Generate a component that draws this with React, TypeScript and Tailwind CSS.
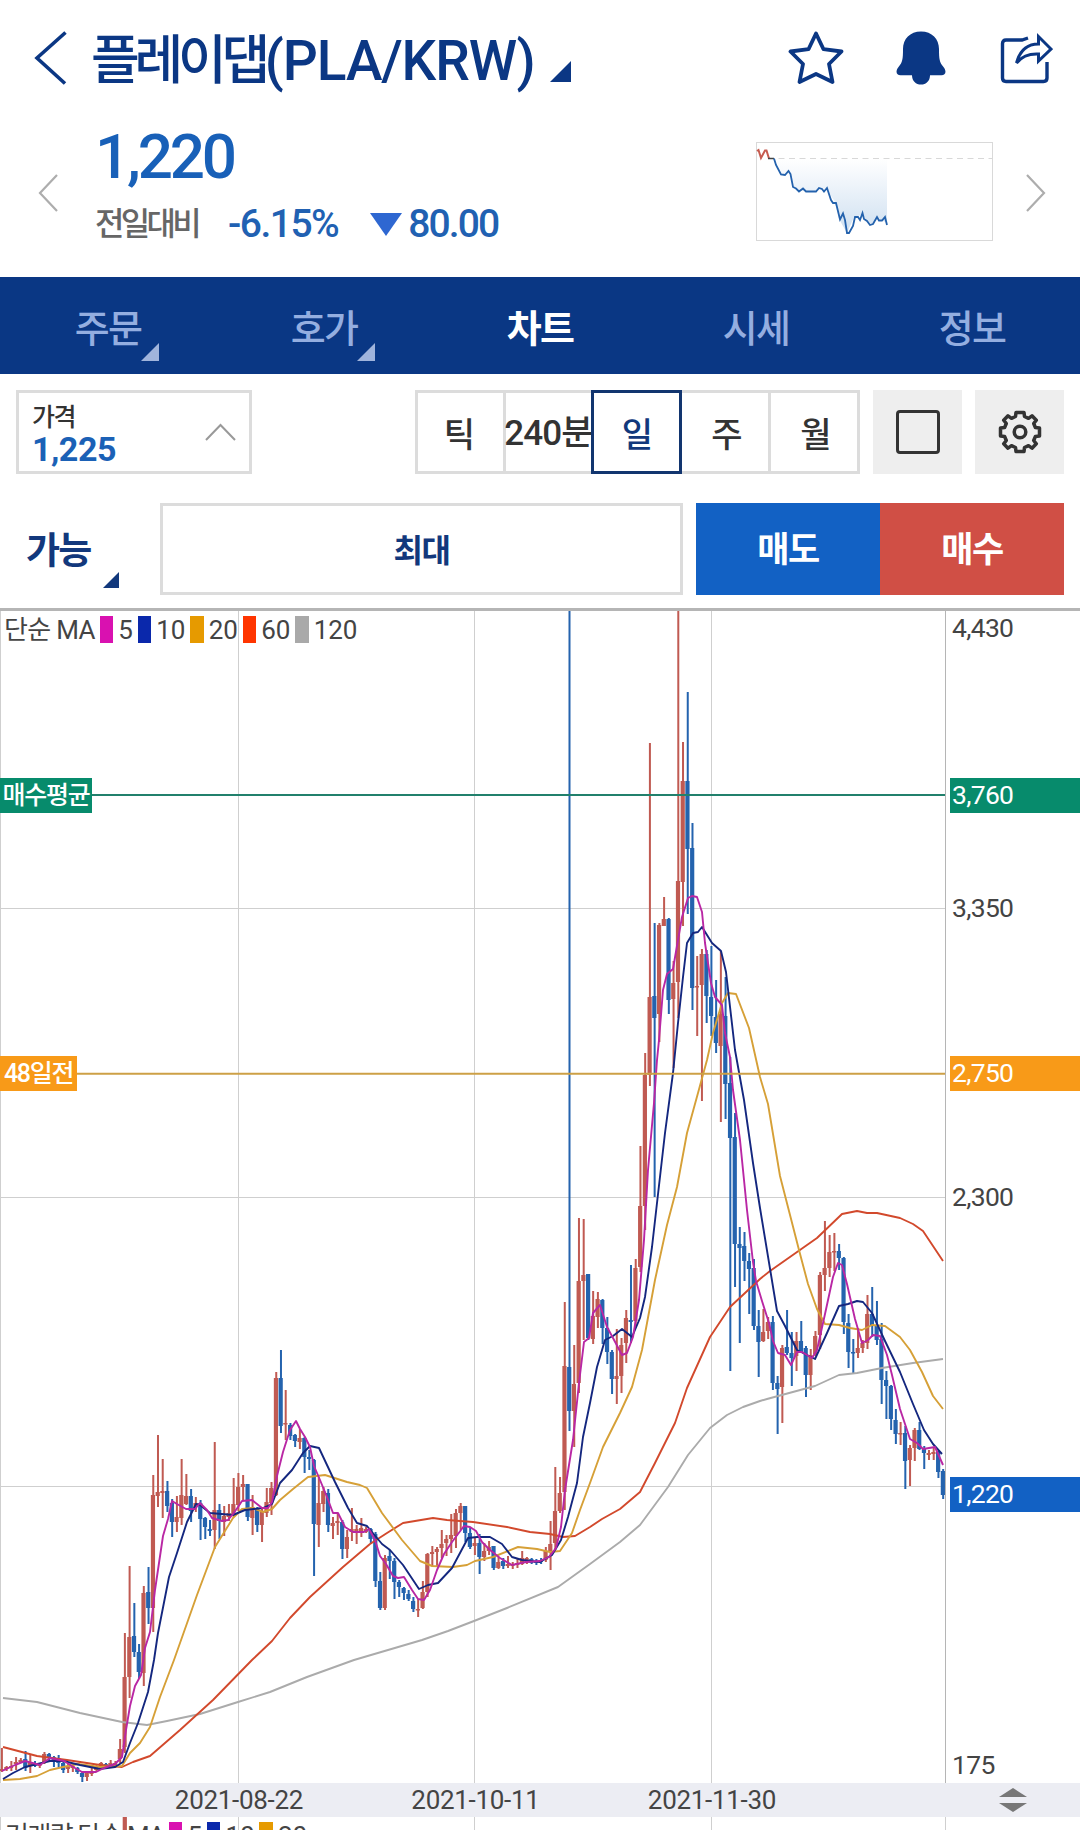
import React from 'react';

type Candle = [high: number, top: number, bottom: number, low: number, up: 0 | 1];
type Line = { color: string; points: string };

const RED = '#c05a52';
const BLUE = '#2463ae';
const STEP = 4.73;
const FIRST_X = 1.8;

// one row per day, in chart units: high, body top, body bottom, low, rising
const CANDLES: Candle[] = [
  [1748, 1769, 1771, 1772, 1], [1766, 1767, 1769, 1771, 1], [1761, 1766, 1768, 1771, 1], [1757, 1762, 1764, 1770, 1], [1758, 1760, 1762, 1763, 1],
  [1751, 1759, 1768, 1771, 0], [1754, 1763, 1766, 1773, 1], [1761, 1763, 1766, 1767, 0], [1763, 1764, 1766, 1768, 1], [1752, 1754, 1762, 1764, 1],
  [1753, 1754, 1758, 1762, 0], [1756, 1757, 1761, 1767, 0], [1755, 1758, 1763, 1767, 0], [1762, 1763, 1770, 1773, 0], [1763, 1766, 1769, 1773, 1],
  [1765, 1766, 1768, 1772, 1], [1767, 1768, 1772, 1774, 0], [1772, 1773, 1777, 1782, 0], [1772, 1773, 1777, 1781, 1], [1768, 1771, 1774, 1776, 1],
  [1764, 1766, 1770, 1772, 1], [1762, 1763, 1767, 1768, 1], [1763, 1764, 1768, 1769, 0], [1760, 1763, 1767, 1768, 1], [1761, 1763, 1767, 1768, 1],
  [1739, 1749, 1759, 1763, 1], [1633, 1677, 1747, 1753, 1], [1566, 1637, 1677, 1698, 1], [1603, 1636, 1652, 1657, 0], [1644, 1652, 1672, 1679, 0],
  [1586, 1593, 1673, 1686, 1], [1567, 1592, 1608, 1624, 0], [1475, 1495, 1608, 1632, 1], [1435, 1492, 1496, 1507, 1], [1459, 1491, 1493, 1518, 1],
  [1481, 1491, 1506, 1512, 0], [1499, 1503, 1522, 1537, 0], [1496, 1517, 1522, 1532, 1], [1459, 1495, 1518, 1525, 1], [1474, 1496, 1504, 1505, 1],
  [1489, 1496, 1511, 1522, 0], [1497, 1503, 1507, 1512, 1], [1500, 1503, 1519, 1540, 0], [1517, 1518, 1527, 1539, 0], [1520, 1529, 1531, 1536, 0],
  [1442, 1510, 1530, 1549, 1], [1504, 1510, 1521, 1539, 0], [1506, 1516, 1522, 1536, 1], [1504, 1513, 1517, 1521, 1], [1478, 1504, 1514, 1517, 1],
  [1473, 1487, 1505, 1511, 1], [1475, 1484, 1487, 1501, 1], [1484, 1484, 1517, 1521, 0], [1495, 1507, 1518, 1535, 1], [1507, 1508, 1525, 1532, 0],
  [1507, 1512, 1525, 1542, 1], [1488, 1502, 1513, 1517, 1], [1482, 1488, 1503, 1515, 1], [1372, 1378, 1495, 1496, 1], [1350, 1378, 1426, 1433, 0],
  [1390, 1423, 1424, 1440, 1], [1423, 1425, 1436, 1440, 0], [1434, 1435, 1441, 1447, 0], [1429, 1438, 1442, 1449, 1], [1437, 1438, 1457, 1473, 0],
  [1450, 1457, 1459, 1470, 0], [1459, 1460, 1524, 1576, 0], [1477, 1503, 1525, 1547, 1], [1487, 1491, 1504, 1512, 1], [1489, 1493, 1525, 1532, 0],
  [1517, 1523, 1526, 1539, 1], [1513, 1521, 1523, 1535, 1], [1520, 1522, 1549, 1559, 0], [1530, 1537, 1549, 1558, 1], [1508, 1529, 1532, 1541, 1],
  [1525, 1529, 1531, 1544, 1], [1518, 1528, 1531, 1537, 1], [1527, 1529, 1532, 1533, 1], [1528, 1529, 1539, 1543, 0], [1532, 1534, 1581, 1587, 0],
  [1572, 1581, 1608, 1610, 0], [1555, 1558, 1608, 1610, 1], [1550, 1556, 1561, 1579, 0], [1558, 1561, 1582, 1599, 0], [1580, 1582, 1587, 1597, 0],
  [1587, 1588, 1593, 1600, 0], [1590, 1594, 1599, 1601, 0], [1597, 1601, 1609, 1612, 0], [1599, 1609, 1610, 1617, 1], [1581, 1592, 1608, 1609, 1],
  [1553, 1554, 1592, 1597, 1], [1546, 1552, 1554, 1566, 1], [1547, 1549, 1552, 1567, 1], [1530, 1544, 1548, 1558, 1], [1535, 1539, 1543, 1556, 1],
  [1514, 1535, 1539, 1553, 1], [1509, 1513, 1536, 1548, 1], [1503, 1506, 1513, 1530, 1], [1506, 1506, 1533, 1542, 0], [1528, 1533, 1547, 1549, 0],
  [1537, 1543, 1546, 1555, 1], [1534, 1543, 1557, 1574, 0], [1543, 1551, 1557, 1561, 1], [1541, 1547, 1551, 1555, 1], [1546, 1546, 1568, 1570, 0],
  [1557, 1562, 1568, 1569, 1], [1558, 1561, 1566, 1569, 0], [1556, 1564, 1566, 1568, 1], [1562, 1564, 1566, 1569, 1], [1558, 1563, 1565, 1568, 1],
  [1551, 1558, 1564, 1565, 1], [1557, 1558, 1563, 1564, 1], [1558, 1559, 1563, 1564, 0], [1559, 1561, 1563, 1565, 0], [1558, 1560, 1562, 1564, 0],
  [1547, 1551, 1560, 1562, 1], [1521, 1544, 1551, 1570, 1], [1467, 1511, 1543, 1550, 1], [1477, 1493, 1511, 1513, 1], [1302, 1366, 1492, 1510, 1],
  [611, 1367, 1411, 1431, 0], [1345, 1384, 1411, 1447, 1], [1218, 1281, 1383, 1393, 1], [1219, 1275, 1281, 1340, 1], [1274, 1274, 1338, 1340, 0],
  [1291, 1316, 1339, 1344, 1], [1292, 1299, 1317, 1328, 1], [1299, 1300, 1328, 1344, 0], [1317, 1328, 1352, 1364, 0], [1350, 1352, 1379, 1394, 0],
  [1329, 1376, 1379, 1404, 1], [1338, 1345, 1376, 1393, 1], [1310, 1318, 1343, 1363, 1], [1265, 1320, 1322, 1343, 0], [1259, 1268, 1321, 1327, 1],
  [1146, 1206, 1267, 1272, 1], [1053, 1075, 1206, 1230, 1], [743, 997, 1075, 1086, 1], [923, 996, 1018, 1197, 0], [923, 925, 1014, 1042, 1],
  [897, 919, 926, 926, 1], [918, 919, 1000, 1014, 0], [961, 983, 999, 1068, 1], [611, 881, 982, 1018, 1], [742, 781, 882, 926, 1],
  [692, 781, 849, 914, 0], [823, 848, 988, 1010, 0], [956, 986, 987, 1036, 1], [949, 954, 985, 1101, 1], [950, 954, 996, 1023, 0],
  [946, 997, 1016, 1036, 0], [980, 1017, 1043, 1053, 0], [951, 1014, 1046, 1122, 1], [977, 1016, 1084, 1119, 0], [1057, 1083, 1138, 1371, 0],
  [1113, 1137, 1244, 1287, 0], [1227, 1244, 1248, 1343, 0], [1232, 1246, 1261, 1281, 0], [1253, 1261, 1269, 1314, 0], [1259, 1268, 1326, 1330, 0],
  [1310, 1326, 1342, 1377, 0], [1309, 1332, 1341, 1342, 1], [1317, 1322, 1331, 1339, 1], [1316, 1322, 1383, 1390, 0], [1376, 1383, 1389, 1434, 0],
  [1345, 1348, 1387, 1423, 1], [1310, 1347, 1353, 1355, 0], [1332, 1353, 1358, 1386, 0], [1332, 1341, 1356, 1371, 1], [1321, 1341, 1352, 1353, 0],
  [1346, 1348, 1375, 1397, 0], [1349, 1355, 1375, 1390, 1], [1331, 1336, 1354, 1356, 1], [1272, 1275, 1335, 1349, 1], [1221, 1268, 1275, 1291, 1],
  [1235, 1252, 1268, 1277, 1], [1233, 1251, 1252, 1271, 1], [1244, 1251, 1258, 1270, 0], [1257, 1258, 1322, 1334, 0], [1314, 1323, 1352, 1368, 0],
  [1339, 1352, 1353, 1374, 0], [1328, 1348, 1353, 1358, 1], [1340, 1343, 1348, 1353, 1], [1295, 1314, 1343, 1349, 1], [1287, 1314, 1326, 1337, 0],
  [1301, 1326, 1340, 1345, 0], [1323, 1339, 1380, 1404, 0], [1371, 1380, 1386, 1419, 0], [1385, 1386, 1419, 1430, 0], [1409, 1420, 1434, 1444, 0],
  [1422, 1433, 1434, 1445, 1], [1426, 1433, 1461, 1489, 0], [1445, 1448, 1460, 1486, 1], [1428, 1430, 1448, 1461, 1], [1422, 1430, 1449, 1450, 0],
  [1446, 1449, 1453, 1469, 0], [1450, 1453, 1455, 1460, 1], [1448, 1452, 1454, 1460, 1], [1451, 1452, 1472, 1478, 0], [1469, 1471, 1495, 1499, 0],
];

const MA_LINES: Line[] = [
  {
    color: '#b927a4',
    points:
      '2,1771 15,1765 25,1761 40,1765 50,1758 64,1761 75,1768 82,1772 96,1772 104,1768 115,1764 122,1757 126,1730 130,1706 135,1686 141,1675 145,1648 150,1632 155,1590 163,1536 168,1519 172,1501 177,1504 186,1509 195,1509 200,1503 207,1510 212,1518 222,1521 228,1520 233,1514 238,1507 242,1501 252,1500 257,1504 262,1508 268,1508 272,1502 277,1476 283,1452 290,1430 296,1421 300,1429 305,1437 310,1447 314,1466 320,1480 327,1497 333,1513 338,1513 345,1527 353,1532 364,1532 369,1529 375,1540 380,1556 386,1564 393,1576 398,1578 404,1577 412,1590 418,1599 424,1600 430,1590 437,1570 444,1554 452,1542 458,1534 464,1526 470,1527 476,1531 482,1542 490,1550 500,1558 512,1565 526,1562 540,1561 549,1557 556,1548 561,1527 565,1490 573,1440 579,1383 584,1342 589,1338 593,1313 600,1305 607,1327 613,1338 622,1355 627,1353 633,1337 639,1300 644,1240 648,1170 654,1103 657,1060 659,1040 663,990 667,974 673,969 678,940 682,917 688,898 692,896 697,897 702,912 705,943 711,983 715,997 722,1005 725,1033 730,1057 733,1090 740,1140 747,1210 753,1262 756,1281 762,1301 769,1323 773,1341 778,1353 785,1355 791,1365 797,1352 802,1352 812,1358 817,1350 825,1314 833,1277 838,1263 842,1265 847,1284 855,1319 862,1343 868,1340 873,1335 880,1336 887,1355 892,1375 900,1409 910,1439 917,1443 923,1449 935,1447 943,1465',
  },
  {
    color: '#14277f',
    points:
      '3,1779 13,1773 25,1767 50,1761 63,1761 80,1765 100,1769 115,1767 123,1762 130,1743 138,1723 148,1692 154,1660 158,1633 169,1577 177,1553 187,1522 196,1504 200,1505 210,1513 233,1515 245,1510 263,1508 272,1504 280,1483 292,1470 303,1453 310,1446 319,1448 335,1482 348,1508 357,1523 367,1526 382,1544 390,1550 403,1565 419,1589 428,1585 438,1583 452,1568 468,1538 477,1537 490,1537 502,1544 512,1557 522,1560 540,1562 552,1555 561,1540 568,1517 577,1483 583,1437 590,1403 597,1367 605,1340 613,1336 622,1329 632,1337 640,1318 645,1297 652,1247 657,1203 665,1133 673,1073 678,1023 683,977 687,943 693,933 698,932 702,927 712,943 721,951 726,972 735,1050 744,1100 753,1163 760,1208 777,1311 785,1326 797,1350 815,1359 827,1333 839,1306 848,1304 857,1301 863,1302 872,1313 885,1341 900,1372 913,1404 924,1430 933,1444 942,1454',
  },
  {
    color: '#d6a037',
    points:
      '3,1780 20,1779 37,1776 50,1770 63,1767 78,1764 100,1767 122,1766 130,1753 140,1743 150,1727 160,1697 174,1660 197,1595 215,1547 233,1518 242,1509 253,1508 263,1512 272,1509 280,1500 293,1489 308,1477 325,1475 347,1482 360,1485 367,1488 382,1513 402,1540 420,1561 432,1566 453,1567 467,1565 475,1561 493,1557 518,1547 537,1549 550,1552 560,1551 572,1533 580,1510 590,1483 603,1447 620,1413 632,1387 642,1350 655,1280 667,1225 677,1187 687,1133 698,1093 707,1060 713,1033 722,1003 728,993 736,994 749,1028 760,1077 768,1104 780,1176 799,1250 808,1284 817,1309 825,1324 839,1325 850,1328 862,1330 872,1325 885,1326 900,1337 910,1350 922,1372 933,1396 943,1409',
  },
  {
    color: '#d2492c',
    points:
      '3,1747 37,1756 67,1760 100,1765 122,1767 133,1762 150,1756 180,1730 213,1700 252,1660 272,1641 290,1618 310,1597 343,1567 370,1544 387,1533 403,1523 433,1518 447,1520 473,1522 507,1527 530,1532 550,1534 563,1537 575,1536 590,1527 602,1519 620,1509 640,1492 655,1463 675,1423 687,1388 710,1337 730,1307 760,1279 770,1271 817,1238 842,1214 857,1211 867,1213 877,1213 900,1218 913,1224 923,1231 933,1246 943,1261',
  },
  {
    color: '#ababab',
    points:
      '3,1698 37,1702 80,1713 122,1722 147,1725 167,1721 200,1714 238,1702 270,1692 307,1677 354,1660 422,1640 448,1631 474,1621 507,1608 558,1587 590,1564 620,1542 640,1525 668,1487 688,1455 710,1428 727,1415 743,1407 760,1401 767,1399 815,1386 839,1375 857,1373 882,1368 913,1363 943,1359',
  },
];

const GRID_X = [0.5, 238.5, 474.5, 711.5];
const GRID_Y = [908.5, 1197.5, 1486.5];

const LEGEND = [
  { label: '5', swatch: 'bg-[#d911b0]' },
  { label: '10', swatch: 'bg-[#0a28ab]' },
  { label: '20', swatch: 'bg-[#e69a00]' },
  { label: '60', swatch: 'bg-[#ff3500]' },
  { label: '120', swatch: 'bg-[#a9a9a9]' },
];

const TABS = [
  { label: '주문', corner: true },
  { label: '호가', corner: true },
  { label: '차트', active: true },
  { label: '시세' },
  { label: '정보' },
];

function Corner({ className }: { className: string }) {
  return (
    <svg viewBox="0 0 10 10" className={className} fill="currentColor">
      <path d="M10 0V10H0Z" />
    </svg>
  );
}

function Header() {
  return (
    <header className="flex h-[116px] items-center pl-[33px] pr-[27px] text-[#0b3784]">
      <svg width="35" height="54" viewBox="0 0 35 54" fill="none" stroke="currentColor" strokeWidth="3.6" className="shrink-0">
        <path d="M32.5 1.5L4 27L32 52.5" />
      </svg>
      <h1 className="ml-[23px] flex items-center pt-[6px] text-[55px] leading-none font-medium whitespace-nowrap">
        <span className="text-[53px] tracking-[-5.300px]">플레이댑</span>
        <span className="tracking-[-1.100px]">(PLA/KRW)</span>
      </h1>
      <Corner className="mt-[27px] ml-[15px] size-[21px]" />
      <div className="ml-auto flex items-center">
        <svg width="56" height="54" viewBox="0 0 56 54" fill="none" stroke="currentColor" strokeWidth="3.8" strokeLinejoin="round">
          <path d="M28 2.5L35.5 18.2L53.5 20.5L41 33L44.5 51L28 43L11.5 51L15 33L2.5 20.5L20.5 18.2Z" />
        </svg>
        <svg width="50" height="54" viewBox="0 0 50 54" fill="currentColor" className="ml-[52px]">
          <path d="M25 0.5C14 0.5 7 8 7 18C7 28 6.500 31.500 2.500 36C-1 40.500 0.500 44.200 4.500 44.200H16C16 50 20 53.500 25 53.500C30 53.500 34 50 34 44.200H45.500C49.500 44.200 51 40.500 47.500 36C43.500 31.500 43 28 43 18C43 8 36 0.500 25 0.500Z" />
        </svg>
        <svg width="53" height="52" viewBox="0 0 53 52" fill="none" stroke="currentColor" strokeWidth="3.4" className="ml-[54px]">
          <path d="M28 6L22 8H6Q2.500 8 2.500 11.500V46Q2.500 49.500 6 49.500H43.500Q47 49.500 47 46V30" />
          <path d="M16.500 31C20 18 28 12 38.500 12V4.500L51 17L38.500 29V22C29 21.500 22 24 16.500 31Z" strokeWidth="3" />
        </svg>
      </div>
    </header>
  );
}

function Sparkline() {
  return (
    <svg width="237" height="99" viewBox="0 0 237 99" fill="none">
      <defs>
        <linearGradient id="spark" x1="0" y1="0" x2="0" y2="1">
          <stop offset="0" stopColor="#fff" />
          <stop offset="1" stopColor="#cfe0f1" />
        </linearGradient>
      </defs>
      <rect x="0.5" y="0.5" width="236" height="98" stroke="#d9d9d9" />
      <path d="M17 16.500L21 27L27 33L33 29L38 45L43 49L60 49L70 46L79 60L83 77L91 91L98 75L106 73L115 82L122 76L131 81V16.500Z" fill="url(#spark)" />
      <path d="M12 16.500H236" stroke="#d8d8d8" strokeDasharray="6 4.500" />
      <path d="M1 9L2.500 8L5 16L9 8.500L10.500 8.500L13 16.500" stroke="#c65b4f" strokeWidth="2" />
      <path d="M12 16.500H18" stroke="#444" strokeWidth="1.500" />
      <path
        d="M18 16.500L20 23L25 32.500L29 33L32.500 29L34.500 32L37 45L40 46.500L43 49.500L47 46.500L50 49.500H60L63 46L66 47L68 49.500L71 46L75 58L77 61H80L84 77.500L87 71.500L89 78L91 91H93L97 84L99 75H102L104 78L106.500 71L108 77L111 79L114 83L117 82L121 75L123 78.500H126L129 75L131 83"
        stroke="#2462ad"
        strokeWidth="1.800"
      />
    </svg>
  );
}

function PriceSummary() {
  return (
    <section className="flex h-[161px] items-start pr-[34px] pl-[38px]">
      <svg width="20" height="38" viewBox="0 0 20 38" fill="none" stroke="#adadad" strokeWidth="2.200" className="mt-[58px]">
        <path d="M19 1L2 19L19 37" />
      </svg>
      <div className="ml-[37px] flex flex-col">
        <div className="mt-[10px] text-[62px] leading-[62px] font-medium tracking-[-3.200px] text-[#1860b8]">1,220</div>
        <div className="mt-[16px] flex h-[40px] items-center leading-none whitespace-nowrap">
          <span className="w-[133px] text-[32px] font-medium tracking-[-3.700px] text-[#666]">전일대비</span>
          <span className="text-[39px] font-medium tracking-[-1.500px] text-[#2161b2]">-6.15%</span>
          <svg width="32" height="23" viewBox="0 0 32 23" fill="#2e67d1" className="ml-[32px]">
            <path d="M0 0H32L16 23Z" />
          </svg>
          <span className="ml-[6px] text-[39px] font-medium tracking-[-1.900px] text-[#2161b2]">80.00</span>
        </div>
      </div>
      <div className="mt-[26px] ml-auto">
        <Sparkline />
      </div>
      <svg width="20" height="38" viewBox="0 0 20 38" fill="none" stroke="#adadad" strokeWidth="2.200" className="mt-[58px] ml-[33px]">
        <path d="M1 1L18 19L1 37" />
      </svg>
    </section>
  );
}

function Tabs() {
  return (
    <nav className="grid h-[97px] grid-cols-5 bg-[#0a3784] text-[38px] leading-none tracking-[-1.800px]">
      {TABS.map((tab) => (
        <div
          key={tab.label}
          className={`relative flex items-center justify-center pt-[7px] ${tab.active ? 'font-bold text-white' : 'font-medium text-[#94aee0]'}`}
        >
          {tab.label}
          {tab.corner && <Corner className="absolute right-[57px] bottom-[13px] size-[18px] text-[#a0b4dc]" />}
        </div>
      ))}
    </nav>
  );
}

function Toolbar() {
  return (
    <div className="flex h-[84px] px-4 text-[#333]">
      <div className="flex w-[236px] items-center justify-between border-[3px] border-[#dcdcdc] pr-[13px] pl-[13px]">
        <div className="flex flex-col pt-[3px]">
          <span className="text-[25px] leading-[31px] font-medium tracking-[-1.500px]">가격</span>
          <span className="text-[34px] leading-[32px] font-bold tracking-[-0.500px] text-[#1b61b6]">1,225</span>
        </div>
        <svg width="31" height="18" viewBox="0 0 31 18" fill="none" stroke="#999" strokeWidth="2">
          <path d="M1 17L15.500 2L30 17" />
        </svg>
      </div>

      <div className="ml-auto flex text-[34px] leading-none font-medium whitespace-nowrap">
        <div className="flex w-[88px] items-center justify-center border-y-[3px] border-l-[3px] border-[#dcdcdc] pt-[5px] pr-[2px]">틱</div>
        <div className="flex w-[88px] items-center justify-center border-y-[3px] border-l-[3px] border-[#dcdcdc] pt-[3px] text-[35px] tracking-[-0.900px]">240분</div>
        <div className="flex w-[91px] items-center justify-center border-[3px] border-[#12356f] pt-[5px] pl-[2px] text-[#12387c]">일</div>
        <div className="flex w-[86px] items-center justify-center border-y-[3px] border-[#dcdcdc] pt-[5px] pl-[4px]">주</div>
        <div className="flex w-[92px] items-center justify-center border-[3px] border-[#dcdcdc] pt-[5px] pl-[4px]">월</div>
      </div>

      <div className="ml-[13px] flex w-[89px] items-center justify-center bg-[#eee]">
        <div className="size-[44px] rounded-[4px] border-[3.500px] border-[#333]" />
      </div>
      <div className="ml-[13px] flex w-[89px] items-center justify-center bg-[#eee]">
        <svg width="44" height="44" viewBox="0 0 44 44" fill="none" stroke="#333" strokeWidth="3.500" strokeLinejoin="round">
          <path d="M17.500 6.500L18 2.500H26L26.500 6.500L30.500 8.300L34 5.800L38.300 10.200L35.700 13.500L37.400 17.500L41.500 18V26L37.400 26.500L35.700 30.500L38.300 33.800L34 38.200L30.500 35.700L26.500 37.500L26 41.500H18L17.500 37.500L13.500 35.700L10 38.200L5.700 33.800L8.300 30.500L6.600 26.500L2.500 26V18L6.600 17.500L8.300 13.500L5.700 10.200L10 5.800L13.500 8.300Z" />
          <circle cx="22" cy="22" r="5.800" />
        </svg>
      </div>
    </div>
  );
}

function OrderRow() {
  return (
    <div className="mt-[29px] flex h-[92px] pr-4 pl-[26px] text-[37px] leading-none font-bold text-[#12387c]">
      <div className="flex w-[134px] items-center">
        <span className="pt-[5px] tracking-[-1.700px]">가능</span>
        <Corner className="mt-[61px] ml-[12px] size-[16px]" />
      </div>
      <div className="flex w-[523px] items-center justify-center border-[3px] border-[#dcdcdc] pt-[4px] text-[32px] tracking-[-1.500px]">최대</div>
      <div className="ml-[13px] flex flex-1 text-[35px] tracking-[-1.500px] text-white">
        <div className="flex flex-1 items-center justify-center bg-[#1261c4] pt-[3px]">매도</div>
        <div className="flex flex-1 items-center justify-center bg-[#d04f45] pt-[3px]">매수</div>
      </div>
    </div>
  );
}

function Legend({ children, items }: { children: React.ReactNode; items: typeof LEGEND }) {
  return (
    <div className="flex items-center text-[26px] leading-none whitespace-nowrap text-[#444]">
      {children}
      {items.map((item) => (
        <React.Fragment key={item.label}>
          <span className={`mr-[5px] ml-[5px] h-[27px] w-[13.500px] ${item.swatch}`} />
          <span className="tracking-[-0.100px]">{item.label}</span>
        </React.Fragment>
      ))}
    </div>
  );
}

function PriceTag({ y, value, fill }: { y: number; value: string; fill: string }) {
  return (
    <g>
      <rect x="950" y={y - 17.5} width="130" height="35" fill={fill} />
      <text x="952" y={y + 8.5} fill="#fff">{value}</text>
    </g>
  );
}

function Chart() {
  return (
    <div className="relative h-[1172px]">
      <svg width="1080" height="1172" viewBox="0 611 1080 1172" className="block">
        <g stroke="#cfcfcf" strokeWidth="1">
          {GRID_X.map((x) => <path key={x} d={`M${x} 611V1783`} />)}
          {GRID_Y.map((y) => <path key={y} d={`M0 ${y}H945`} />)}
        </g>
        <path d="M945.500 611V1783" stroke="#b5b5b5" />

        {CANDLES.map(([high, top, bottom, low, up], i) => {
          const x = FIRST_X + i * STEP;
          return (
            <g key={i} fill={up ? RED : BLUE}>
              <rect x={x - 0.9} y={high} width="2" height={low - high} />
              <rect x={x - 2.3} y={top} width="4.200" height={Math.max(bottom - top, 1.5)} />
            </g>
          );
        })}

        <g fill="none" strokeWidth="1.900" strokeLinejoin="round">
          {[...MA_LINES].reverse().map((line) => <polyline key={line.color} points={line.points} stroke={line.color} />)}
        </g>

        <path d="M0 795H945" stroke="#21806c" strokeWidth="2" />
        <path d="M0 1073.700H945" stroke="#cda046" strokeWidth="2" />

        {/* price axis */}
        <g fontSize="26.500" letterSpacing="-0.700" fill="#444">
          <text x="952" y="636.500">4,430</text>
          <text x="952" y="916.500">3,350</text>
          <text x="952" y="1205.500">2,300</text>
          <text x="952" y="1494.500">1,175</text>
          <text x="952" y="1773.500">175</text>
          <PriceTag y={795.5} value="3,760" fill="#078b6c" />
          <PriceTag y={1073.5} value="2,750" fill="#f89a18" />
          <PriceTag y={1494.5} value="1,220" fill="#1261c4" />
        </g>
      </svg>

      <div className="absolute top-[5px] left-[4px]">
        <Legend items={LEGEND}>
          <span className="tracking-[-0.700px]">단순 MA</span>
        </Legend>
      </div>
      <div className="absolute top-[167px] left-0 flex h-[35px] w-[92px] items-center justify-center bg-[#078b6c] text-[25px] leading-none font-medium tracking-[-1.300px] whitespace-nowrap text-white">
        매수평균
      </div>
      <div className="absolute top-[445px] left-0 flex h-[35px] w-[77px] items-center justify-center bg-[#f89a18] text-[25px] leading-none font-medium tracking-[-1.300px] whitespace-nowrap text-white">
        48일전
      </div>
    </div>
  );
}

function DateAxis() {
  return (
    <div className="flex h-[34px] items-center bg-[#ecedf3] text-[26px] leading-none tracking-[-0.300px] text-[#444]">
      <span className="ml-[121px] w-[236px] text-center">2021-08-22</span>
      <span className="w-[237px] text-center">2021-10-11</span>
      <span className="w-[236px] text-center">2021-11-30</span>
      <svg width="28" height="24" viewBox="0 0 28 24" fill="#777" className="ml-auto mr-[53px]">
        <path d="M14 0L28 9H0Z" />
        <path d="M0 15H28L14 24Z" />
      </svg>
    </div>
  );
}

function VolumePanel() {
  return (
    <div className="relative h-[13px] overflow-hidden">
      <svg width="1080" height="13" className="absolute inset-0">
        {[...GRID_X, 945.5].map((x) => <path key={x} d={`M${x} 0V13`} stroke="#cfcfcf" />)}
        <rect x="122.700" y="0" width="4.200" height="13" fill={RED} />
      </svg>
      <div className="absolute top-[5px] left-[5px]">
        <Legend items={LEGEND.slice(0, 3)}>
          <span className="tracking-[-1.500px]">거래량 단순 MA</span>
        </Legend>
      </div>
    </div>
  );
}

export default function App() {
  return (
    <main className="flex h-[1830px] w-[1080px] flex-col overflow-hidden bg-white font-['Roboto','Noto_Sans_CJK_KR',sans-serif]">
      <Header />
      <PriceSummary />
      <Tabs />
      <div className="h-[237px] border-b-[3px] border-[#b5b5b5] pt-4">
        <Toolbar />
        <OrderRow />
      </div>
      <Chart />
      <DateAxis />
      <VolumePanel />
    </main>
  );
}
